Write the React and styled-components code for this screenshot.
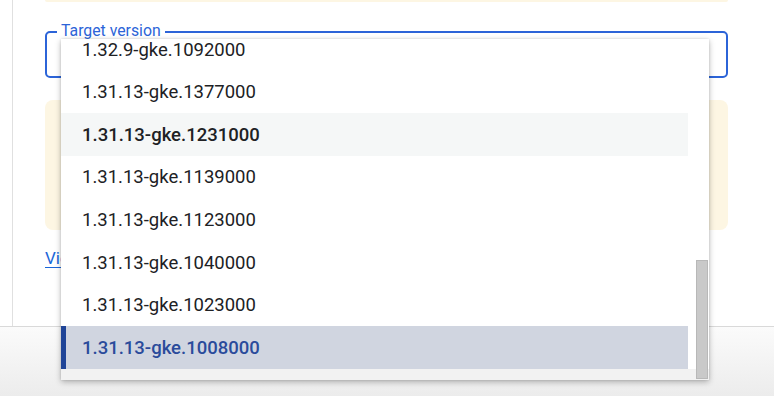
import React from 'react';
import styled, { createGlobalStyle } from 'styled-components';

const GlobalStyle = createGlobalStyle`
  html, body {
    margin: 0;
    padding: 0;
    background: #ffffff;
    font-family: Roboto, 'Noto Sans', Arial, sans-serif;
  }
`;

const Page = styled.div`
  position: relative;
  width: 774px;
  height: 396px;
  display: flex;
  flex-direction: column;
  overflow: hidden;
`;

const Main = styled.div`
  height: 326px;
  display: flex;
  flex-shrink: 0;
`;

const Rail = styled.div`
  width: 12px;
  border-right: 1px solid #e0e0e0;
  flex-shrink: 0;
`;

const Content = styled.div`
  width: 683px;
  padding-left: 32px;
  display: flex;
  flex-direction: column;
`;

const Notice = styled.div`
  height: ${(p) => p.height}px;
  margin-top: ${(p) => p.gap || 0}px;
  background: #fdf6e3;
  border-radius: ${(p) => (p.cut ? '0 0 8px 8px' : '8px')};
  flex-shrink: 0;
`;

const Field = styled.div`
  position: relative;
  height: 43px;
  margin-top: 29px;
  border: 2px solid #2c64d8;
  border-radius: 5px;
  flex-shrink: 0;
`;

const FieldLabel = styled.span`
  position: absolute;
  top: -11px;
  left: 10px;
  padding: 0 4px;
  background: #ffffff;
  color: #2c64d8;
  font-size: 15.8px;
  line-height: 18px;
`;

const Link = styled.a`
  margin-top: 18px;
  color: #1a66d9;
  font-size: 17px;
  line-height: 20px;
  text-decoration: underline;
  text-underline-offset: 3px;
  align-self: flex-start;
`;

const Footer = styled.div`
  flex: 1;
  border-top: 1px solid #d9d9d9;
  background: linear-gradient(#fbfbfb, #ececec);
`;

const Menu = styled.div`
  position: absolute;
  left: 61px;
  top: 39px;
  width: 648px;
  height: 341px;
  display: flex;
  background: linear-gradient(to top, #f2f2f2 11px, #ffffff 11px);
  box-shadow: 0 2px 6px rgba(0, 0, 0, 0.28), 0 0 2px rgba(0, 0, 0, 0.12);
`;

const List = styled.ul`
  list-style: none;
  margin: 0;
  padding: 0 0 11px;
  flex: 1;
  display: flex;
  flex-direction: column;
  justify-content: flex-end;
  overflow: hidden;
`;

const Option = styled.li`
  flex-shrink: 0;
  height: 42.6px;
  display: flex;
  align-items: center;
  padding-left: ${(p) => (p.selected ? 16 : 21)}px;
  border-left: ${(p) => (p.selected ? '5px solid #1f4497' : 'none')};
  background: ${(p) => (p.selected ? '#d0d5e0' : p.hover ? '#f5f7f7' : '#ffffff')};
  color: ${(p) => (p.selected ? '#2a4b9b' : '#202124')};
  font-size: 18.5px;
  font-weight: ${(p) => (p.selected || p.hover ? 500 : 400)};
  white-space: nowrap;
`;

const Track = styled.div`
  width: 12px;
  padding: 0 1px 1px 8px;
  display: flex;
  flex-direction: column;
  justify-content: flex-end;
`;

const Thumb = styled.div`
  height: 117px;
  background: #c9c9c9;
  border: 1px solid #b8b8b8;
`;

const versions = [
  '1.32.9-gke.1092000',
  '1.31.13-gke.1377000',
  '1.31.13-gke.1231000',
  '1.31.13-gke.1139000',
  '1.31.13-gke.1123000',
  '1.31.13-gke.1040000',
  '1.31.13-gke.1023000',
  '1.31.13-gke.1008000',
];

const hovered = '1.31.13-gke.1231000';
const selected = '1.31.13-gke.1008000';

export default function App() {
  return (
    <>
      <GlobalStyle />
      <Page>
        <Main>
          <Rail />
          <Content>
            <Notice height={2} cut />
            <Field>
              <FieldLabel>Target version</FieldLabel>
            </Field>
            <Notice height={130} gap={22} />
            <Link href="#">View release notes</Link>
          </Content>
        </Main>
        <Footer />
        <Menu>
          <List role="listbox">
            {versions.map((v) => (
              <Option key={v} hover={v === hovered} selected={v === selected}>
                {v}
              </Option>
            ))}
          </List>
          <Track>
            <Thumb />
          </Track>
        </Menu>
      </Page>
    </>
  );
}
